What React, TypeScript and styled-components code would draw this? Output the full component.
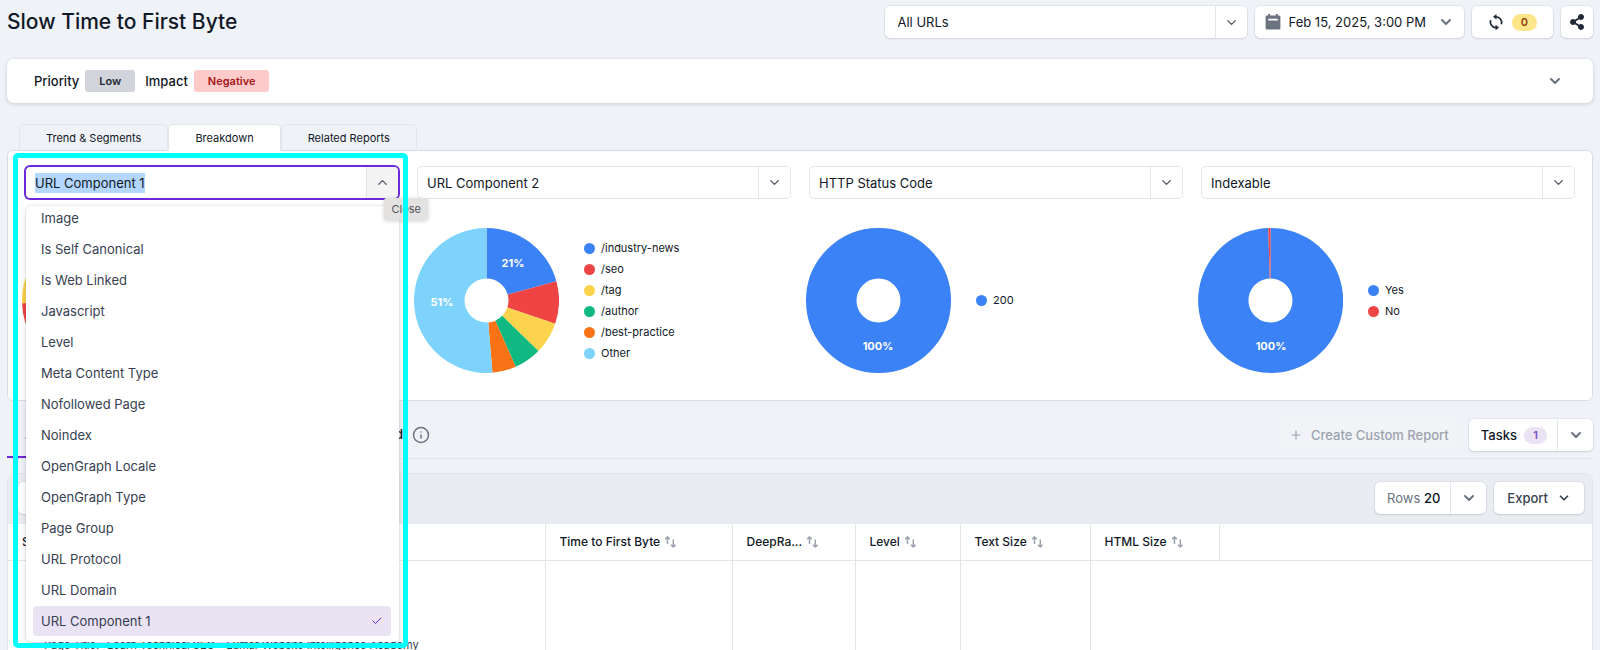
import React, { useEffect, useRef } from "react";
import styled, { createGlobalStyle, css } from "styled-components";
import { Check, ChevronDown, ChevronUp, Info, Plus } from "lucide-react";
import { FaShareAlt } from "react-icons/fa";

const c = {
  page: "#eff2f7",
  line: "#e2e5ea",
  lineStrong: "#d9dde3",
  ink: "#111827",
  text: "#374151",
  muted: "#6b7280",
  faint: "#9ca3af",
  purple: "#6d28d9",
  lilac: "#eae3f4",
  blue: "#3b82f6",
  red: "#ef4444",
  yellow: "#fcd34d",
  green: "#10b981",
  orange: "#f97316",
  sky: "#7dd3fc",
};

const GlobalStyle = createGlobalStyle`
  *, *::before, *::after { box-sizing: border-box; }
  body {
    margin: 0;
    background: ${c.page};
    color: ${c.ink};
    font-family: Inter, "Liberation Sans", sans-serif;
    font-size: 13px;
    line-height: 20px;
  }
  button, input {
    font: inherit;
    color: inherit;
    margin: 0;
    padding: 0;
    border: 0;
    background: none;
  }
  svg { display: block; flex: none; }
  ::selection { background: #b3d7ff; color: ${c.ink}; }
`;

const Page = styled.div`
  display: flex;
  flex-direction: column;
  height: 100vh;
  overflow: hidden;
  padding: 6px 7px 0;
`;

const Header = styled.header`
  display: flex;
  align-items: center;
  gap: 8px;
`;

const Title = styled.h1`
  flex: 1;
  margin: 0;
  font-size: 21px;
  line-height: 30px;
  font-weight: 500;
`;

const raised = css`
  background: #fff;
  border-radius: 5px;
  box-shadow: 0 0 1px 1px rgba(17, 24, 39, 0.05), 0 1px 2px rgba(17, 24, 39, 0.1);
`;

const HeaderButton = styled.button<{ $pad: number }>`
  ${raised}
  display: flex;
  align-items: center;
  justify-content: center;
  gap: 8px;
  height: 32px;
  padding: 0 ${(p) => p.$pad}px;
`;

const Stamp = styled.span`
  margin-right: 4px;
`;

const Pill = styled.span<{ $tone: "amber" | "lilac" }>`
  display: inline-flex;
  align-items: center;
  justify-content: center;
  width: ${(p) => (p.$tone === "amber" ? 25 : 23)}px;
  height: 17px;
  border-radius: 9px;
  font-size: 11px;
  font-weight: 600;
  background: ${(p) => (p.$tone === "amber" ? "#fde68a" : c.lilac)};
  color: ${(p) => (p.$tone === "amber" ? "#92400e" : "#7c4dcc")};
`;

const Combo = styled.div<{ $variant?: "raised" | "open" }>`
  display: flex;
  height: ${(p) => (p.$variant === "raised" ? 32 : 33)}px;
  overflow: hidden;
  border-radius: 5px;
  background: #fff;
  border: 1px solid ${(p) => (p.$variant === "open" ? c.purple : c.line)};
  ${(p) => p.$variant === "raised" && css`width: 362px; ${raised} border: 0;`}
  ${(p) => p.$variant === "open" && css`box-shadow: 0 0 0 1px ${c.purple};`}
`;

const ComboInput = styled.input<{ $inset?: number }>`
  flex: 1;
  min-width: 0;
  padding: 0 10px 0 ${(p) => p.$inset ?? 9}px;
  outline: none;
`;

const ComboButton = styled.button<{ $open?: boolean }>`
  display: flex;
  align-items: center;
  justify-content: center;
  width: 32px;
  color: #4b5563;
  border-left: 1px solid ${c.line};
  background: ${(p) => (p.$open ? "#f4f4f5" : "#fff")};
`;

const Summary = styled.section`
  display: flex;
  align-items: center;
  gap: 6px;
  height: 44px;
  margin-top: 21px;
  padding: 0 30px 0 27px;
  border-radius: 7px;
  background: #fff;
  box-shadow: 0 1px 4px rgba(17, 24, 39, 0.16);
`;

const SummaryLabel = styled.span`
  font-weight: 500;
`;

const Tag = styled.span<{ $negative?: boolean }>`
  height: 22px;
  padding: 0 14px;
  margin-right: 4px;
  border-radius: 3px;
  font-size: 11px;
  line-height: 22px;
  font-weight: 600;
  background: ${(p) => (p.$negative ? "#fecaca" : "#d1d5db")};
  color: ${(p) => (p.$negative ? "#a31616" : "#1f2937")};
`;

const IconButton = styled.button`
  display: flex;
  margin-left: auto;
  color: ${c.muted};
`;

const Tabs = styled.div`
  position: relative;
  z-index: 1;
  display: flex;
  margin: 21px 0 -1px 12px;
`;

const Tab = styled.button<{ $active?: boolean }>`
  height: 27px;
  padding: 0 26px;
  border: 1px solid ${c.line};
  border-bottom-color: ${(p) => (p.$active ? "#fff" : c.lineStrong)};
  border-radius: 5px 5px 0 0;
  font-size: 11px;
  background: ${(p) => (p.$active ? "#fff" : c.page)};
`;

const Breakdown = styled.section`
  position: relative;
  display: grid;
  grid-template-columns: repeat(4, 1fr);
  gap: 18px;
  padding: 15px 17px 27px;
  border: 1px solid ${c.lineStrong};
  border-radius: 6px;
  background: #fff;
`;

const Column = styled.div`
  position: relative;
`;

const ChartRow = styled.div`
  display: flex;
  align-items: center;
  gap: 25px;
  margin: 29px 0 0 -3px;
`;

const Legend = styled.ul`
  margin: 0;
  padding: 0;
  list-style: none;
  font-size: 11px;
  line-height: 21px;
`;

const LegendItem = styled.li<{ $color: string }>`
  display: flex;
  align-items: center;
  gap: 6px;
  &::before {
    content: "";
    width: 11px;
    height: 11px;
    border-radius: 50%;
    background: ${(p) => p.$color};
  }
`;

const SliceLabel = styled.text`
  fill: #fff;
  font-size: 11px;
  font-weight: 700;
  text-anchor: middle;
`;

const Menu = styled.ul`
  position: absolute;
  z-index: 3;
  top: 40px;
  left: 1px;
  right: 0;
  display: flex;
  flex-direction: column;
  justify-content: flex-end;
  gap: 1px;
  height: 436px;
  margin: 0;
  padding: 0 8px 6px 7px;
  overflow: hidden;
  list-style: none;
  background: #fff;
  border-radius: 5px;
  box-shadow: 0 0 2px rgba(17, 24, 39, 0.14), 0 2px 6px rgba(17, 24, 39, 0.14);
`;

const Option = styled.li<{ $selected: boolean }>`
  display: flex;
  flex: none;
  align-items: center;
  justify-content: space-between;
  height: 30px;
  padding: 0 8px;
  border-radius: 4px;
  color: ${c.text};
  background: ${(p) => (p.$selected ? c.lilac : "transparent")};
  svg { color: ${c.purple}; }
`;

const Tooltip = styled.div`
  position: absolute;
  z-index: 4;
  top: 32px;
  right: -29px;
  padding: 0 7px;
  border-radius: 3px;
  font-size: 11px;
  line-height: 22px;
  color: #52525b;
  background: #e3e2e1;
  box-shadow: 0 1px 4px rgba(17, 24, 39, 0.2);
`;

const Highlight = styled.div`
  position: absolute;
  z-index: 5;
  top: -13px;
  left: -12px;
  right: -9px;
  height: 495px;
  border: 5px solid #00ffff;
  border-radius: 5px;
  pointer-events: none;
`;

const ReportBar = styled.nav`
  display: flex;
  align-items: center;
  gap: 9px;
  height: 58px;
  padding-top: 11px;
  border-bottom: 1px solid ${c.line};
`;

const ReportTab = styled.button<{ $active?: boolean }>`
  height: 46px;
  padding: 0 18px;
  font-weight: 500;
  color: ${(p) => (p.$active ? c.purple : c.ink)};
  border-bottom: 2px solid ${(p) => (p.$active ? c.purple : "transparent")};
`;

const ReportGroup = styled.div`
  display: flex;
  align-items: center;
  justify-content: space-between;
  width: 396px;
  ${ReportTab}:last-child { padding-right: 0; }
`;

const CreateButton = styled.button`
  display: flex;
  align-items: center;
  gap: 8px;
  height: 32px;
  margin-left: auto;
  padding: 0 11px;
  border-radius: 5px;
  font-weight: 500;
  color: ${c.faint};
  background: #f1f3f6;
`;

const Split = styled.div`
  ${raised}
  display: flex;
  height: 32px;
`;

const SplitMain = styled.button`
  display: flex;
  align-items: center;
  gap: 7px;
  padding: 0 10px 0 12px;
  font-weight: 500;
`;

const RowsLabel = styled.span`
  font-weight: 400;
  color: ${c.muted};
  strong { font-weight: 500; color: ${c.ink}; }
`;

const SplitToggle = styled.button`
  display: flex;
  align-items: center;
  justify-content: center;
  width: 36px;
  border-left: 1px solid ${c.line};
  color: ${c.muted};
`;

const TablePanel = styled.section`
  flex: 1;
  margin-top: 14px;
  overflow: hidden;
  border: 1px solid ${c.line};
  border-bottom: 0;
  border-radius: 7px 7px 0 0;
  background: #fff;
`;

const Toolbar = styled.div`
  display: flex;
  align-items: center;
  gap: 8px;
  padding: 8px 8px 10px 10px;
  background: #e9ecf1;
`;

const Search = styled.input`
  ${raised}
  width: 240px;
  height: 32px;
  margin-right: auto;
  padding: 0 12px;
`;

const ExportButton = styled.button`
  ${raised}
  display: flex;
  align-items: center;
  gap: 9px;
  height: 32px;
  padding: 0 13px;
  font-weight: 500;
  color: ${c.text};
`;

const Table = styled.table`
  width: 100%;
  table-layout: fixed;
  border-collapse: collapse;
`;

const Col = styled.col<{ $width?: number }>`
  width: ${(p) => (p.$width ? `${p.$width}px` : "auto")};
`;

const HeadCell = styled.th`
  height: 36px;
  padding: 0 14px;
  border-bottom: 1px solid ${c.line};
  text-align: left;
  font-size: 12px;
  font-weight: 500;
  white-space: nowrap;
  & + & { border-left: 1px solid ${c.line}; }
`;

const HeadLabel = styled.span`
  display: flex;
  align-items: center;
  gap: 4px;
`;

const Cell = styled.td`
  height: 120px;
  padding: 0 14px;
  vertical-align: top;
  & + &:not(:last-child) { border-left: 1px solid ${c.line}; }
`;

const PageEntry = styled.div`
  display: flex;
  gap: 8px;
  padding: 74px 0 0 22px;
  font-size: 11px;
  white-space: nowrap;
  color: ${c.text};
`;

type Slice = { name: string; color: string; share: number; label?: string };

const OUTER = 72.5;
const INNER = 22;

function slicePath(from: number, to: number) {
  const at = (radius: number, t: number) => {
    const a = t * 2 * Math.PI - Math.PI / 2;
    return `${(OUTER + radius * Math.cos(a)).toFixed(2)} ${(OUTER + radius * Math.sin(a)).toFixed(2)}`;
  };
  const big = to - from > 0.5 ? 1 : 0;
  return `M${at(OUTER, from)}A${OUTER} ${OUTER} 0 ${big} 1 ${at(OUTER, to)}L${at(INNER, to)}A${INNER} ${INNER} 0 ${big} 0 ${at(INNER, from)}Z`;
}

function Donut({ slices }: { slices: Slice[] }) {
  let start = 0;
  return (
    <svg width="145" height="145" viewBox="0 0 145 145" role="img" aria-label="Breakdown chart">
      {slices.map((s) => {
        const from = start;
        const to = from + s.share / 100;
        start = to;
        const mid = ((from + to) / 2) * 2 * Math.PI - Math.PI / 2;
        return (
          <g key={s.name}>
            {s.share === 100 ? (
              <circle
                cx={OUTER}
                cy={OUTER}
                r={(OUTER + INNER) / 2}
                fill="none"
                stroke={s.color}
                strokeWidth={OUTER - INNER}
              />
            ) : (
              <path d={slicePath(from, to)} fill={s.color} />
            )}
            {s.label && (
              <SliceLabel
                x={Math.round(72 + 44 * Math.cos(mid))}
                y={Math.round(76 + 46 * Math.sin(mid))}
              >
                {s.label}
              </SliceLabel>
            )}
          </g>
        );
      })}
    </svg>
  );
}

function SortIcon() {
  return (
    <svg width="13" height="13" viewBox="0 0 13 13" fill="none" stroke="#9ca3af" strokeWidth="1.5">
      <path d="M3.5 9V2M1.2 4.2 3.500 1.900l2.300 2.300M9.300 4.500v7.500M7 9.700l2.300 2.300 2.300-2.300" />
    </svg>
  );
}

function SyncIcon() {
  return (
    <svg width="16" height="16" viewBox="0 0 16 16" fill="#1f2937">
      <g fill="none" stroke="#1f2937" strokeWidth="1.700">
        <path d="M8 2.800A5.600 5.600 0 0 1 13.300 10.300" />
        <path d="M8 13.600A5.600 5.600 0 0 1 2.700 6.100" />
      </g>
      <path d="M8.500 0v5.600L5 2.800zM7.500 10.800v5.600l3.500-2.800z" />
    </svg>
  );
}

function CalendarIcon() {
  return (
    <svg width="16" height="16" viewBox="0 0 16 16">
      <path
        fill="#6b7280"
        fillRule="evenodd"
        d="M3.2 0h2v1.6h5.6V0h2v1.6h1.2c.8 0 1.4.6 1.4 1.4v11.2c0 .8-.6 1.4-1.4 1.4H2c-.8 0-1.400-.6-1.400-1.400V3c0-.8.6-1.400 1.400-1.400h1.200zM3.200 4.800v1.700h9.600V4.800z"
      />
    </svg>
  );
}

const charts: { title: string; slices: Slice[]; hideLegend?: boolean }[] = [
  {
    title: "URL Component 1",
    hideLegend: true,
    slices: [
      { name: "/blog", color: c.blue, share: 58 },
      { name: "/resources", color: c.red, share: 16.4 },
      { name: "/webinars", color: c.yellow, share: 15.6 },
      { name: "/events", color: c.green, share: 10 },
    ],
  },
  {
    title: "URL Component 2",
    slices: [
      { name: "/industry-news", color: c.blue, share: 20.7, label: "21%" },
      { name: "/seo", color: c.red, share: 9.5 },
      { name: "/tag", color: c.yellow, share: 7.1 },
      { name: "/author", color: c.green, share: 6.1 },
      { name: "/best-practice", color: c.orange, share: 5.3 },
      { name: "Other", color: c.sky, share: 51.3, label: "51%" },
    ],
  },
  { title: "HTTP Status Code", slices: [{ name: "200", color: c.blue, share: 100, label: "100%" }] },
  {
    title: "Indexable",
    slices: [
      { name: "Yes", color: c.blue, share: 99.5, label: "100%" },
      { name: "No", color: c.red, share: 0.5 },
    ],
  },
];

const options = [
  "Image",
  "Is Self Canonical",
  "Is Web Linked",
  "Javascript",
  "Level",
  "Meta Content Type",
  "Nofollowed Page",
  "Noindex",
  "OpenGraph Locale",
  "OpenGraph Type",
  "Page Group",
  "URL Protocol",
  "URL Domain",
  "URL Component 1",
];

const columns: { label: string; width?: number; sort?: boolean }[] = [
  { label: "Screenshot", width: 537 },
  { label: "Time to First Byte", width: 187, sort: true },
  { label: "DeepRa...", width: 123, sort: true },
  { label: "Level", width: 105, sort: true },
  { label: "Text Size", width: 130, sort: true },
  { label: "HTML Size", width: 129, sort: true },
  { label: "" },
];

export default function App() {
  const activeInput = useRef<HTMLInputElement>(null);

  useEffect(() => {
    activeInput.current?.focus({ preventScroll: true });
    activeInput.current?.select();
  }, []);

  return (
    <>
      <GlobalStyle />
      <Page>
        <Header>
          <Title>Slow Time to First Byte</Title>
          <Combo $variant="raised">
            <ComboInput $inset={13} aria-label="Segment" defaultValue="All URLs" />
            <ComboButton aria-label="Open segments">
              <ChevronDown size={15} />
            </ComboButton>
          </Combo>
          <HeaderButton $pad={10}>
            <CalendarIcon />
            <Stamp>Feb 15, 2025, 3:00 PM</Stamp>
            <ChevronDown size={16} color={c.muted} strokeWidth={3} />
          </HeaderButton>
          <HeaderButton $pad={16} aria-label="Running crawls">
            <SyncIcon />
            <Pill $tone="amber">0</Pill>
          </HeaderButton>
          <HeaderButton $pad={8} aria-label="Share">
            <FaShareAlt size={16} color="#1f2937" />
          </HeaderButton>
        </Header>

        <Summary>
          <SummaryLabel>Priority</SummaryLabel>
          <Tag>Low</Tag>
          <SummaryLabel>Impact</SummaryLabel>
          <Tag $negative>Negative</Tag>
          <IconButton aria-label="Expand summary">
            <ChevronDown size={16} strokeWidth={3} />
          </IconButton>
        </Summary>

        <Tabs role="tablist">
          <Tab role="tab">Trend &amp; Segments</Tab>
          <Tab role="tab" aria-selected $active>Breakdown</Tab>
          <Tab role="tab">Related Reports</Tab>
        </Tabs>

        <Breakdown>
          {charts.map((chart, i) => {
            const open = i === 0;
            return (
              <Column key={chart.title}>
                <Combo $variant={open ? "open" : undefined}>
                  <ComboInput
                    ref={open ? activeInput : undefined}
                    aria-label={`Breakdown ${i + 1}`}
                    defaultValue={chart.title}
                  />
                  <ComboButton $open={open} aria-label={open ? "Close" : "Open"}>
                    {open ? <ChevronUp size={15} /> : <ChevronDown size={15} />}
                  </ComboButton>
                </Combo>
                <ChartRow>
                  <Donut slices={chart.slices} />
                  {!chart.hideLegend && (
                    <Legend>
                      {chart.slices.map((s) => (
                        <LegendItem key={s.name} $color={s.color}>{s.name}</LegendItem>
                      ))}
                    </Legend>
                  )}
                </ChartRow>
                {open && (
                  <>
                    <Menu role="listbox" aria-label="Breakdown options">
                      {options.map((o) => (
                        <Option key={o} role="option" aria-selected={o === chart.title} $selected={o === chart.title}>
                          {o}
                          {o === chart.title && <Check size={12} />}
                        </Option>
                      ))}
                    </Menu>
                    <Tooltip role="tooltip">Close</Tooltip>
                    <Highlight />
                  </>
                )}
              </Column>
            );
          })}
        </Breakdown>

        <ReportBar>
          <ReportGroup>
            <ReportTab $active>All</ReportTab>
            <ReportTab>Removed</ReportTab>
          </ReportGroup>
          <Info size={18} color={c.muted} strokeWidth={2} />
          <CreateButton disabled>
            <Plus size={14} />
            Create Custom Report
          </CreateButton>
          <Split>
            <SplitMain>
              Tasks <Pill $tone="lilac">1</Pill>
            </SplitMain>
            <SplitToggle aria-label="Open tasks">
              <ChevronDown size={16} strokeWidth={3} />
            </SplitToggle>
          </Split>
        </ReportBar>

        <TablePanel>
          <Toolbar>
            <Search aria-label="Search rows" />
            <Split>
              <SplitMain>
                <RowsLabel>Rows <strong>20</strong></RowsLabel>
              </SplitMain>
              <SplitToggle aria-label="Rows per page">
                <ChevronDown size={16} strokeWidth={3} />
              </SplitToggle>
            </Split>
            <ExportButton>
              Export <ChevronDown size={14} strokeWidth={3} />
            </ExportButton>
          </Toolbar>
          <Table>
            <colgroup>
              {columns.map((col) => <Col key={col.label} $width={col.width} />)}
            </colgroup>
            <thead>
              <tr>
                {columns.map((col) => (
                  <HeadCell key={col.label}>
                    <HeadLabel>
                      {col.label}
                      {col.sort && <SortIcon />}
                    </HeadLabel>
                  </HeadCell>
                ))}
              </tr>
            </thead>
            <tbody>
              <tr>
                <Cell>
                  <PageEntry>
                    <span>Page Title:</span>
                    <span>Learn Technical SEO - Lumar Website Intelligence Academy</span>
                  </PageEntry>
                </Cell>
                <Cell /><Cell /><Cell /><Cell /><Cell /><Cell />
              </tr>
            </tbody>
          </Table>
        </TablePanel>
      </Page>
    </>
  );
}
